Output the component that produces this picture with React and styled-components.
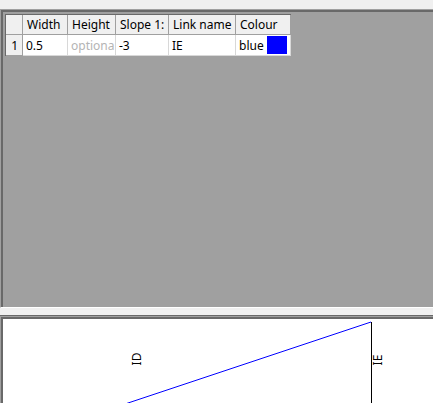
import React from 'react';
import styled, { createGlobalStyle } from 'styled-components';

const GlobalStyle = createGlobalStyle`
html, body {
  margin: 0;
  padding: 0;
  background: #f0f0f0;
  overflow: hidden;
}
body {
  font-family: "Noto Sans", "Open Sans", sans-serif;
  font-size: 12px;
  color: #000;
}
`;

const Window = styled.div`
width: 433px;
height: 403px;
display: flex;
flex-direction: column;
padding-top: 9px;
box-sizing: border-box;
overflow: hidden;
`;

const Panel = styled.div`
width: 450px;
box-sizing: border-box;
flex: ${p => (p.$grow ? '1 1 auto' : '0 0 auto')};
height: ${p => (p.$height ? p.$height + 'px' : 'auto')};
border-top: 1px solid #a0a0a0;
border-left: 1px solid #a0a0a0;
border-bottom: 1px solid #ffffff;
box-shadow: inset 2px 2px 0 #696969;
padding: 3px 0 0 3px;
background: ${p => p.$bg};
`;

const Splitter = styled.div`
height: 8px;
flex: 0 0 auto;
border-bottom: 1px solid #696969;
box-sizing: border-box;
`;

const Grid = styled.div`
display: grid;
grid-template-columns: 17px 45px 48px 53px 67px 55px;
grid-auto-rows: 20px 21px;
width: max-content;
border-top: 1px solid #696969;
border-left: 1px solid #696969;
margin-left: 1px;
margin-top: 1px;
`;

const HeadCell = styled.div`
background: #f0f0f0;
border-right: 1px solid #a0a0a0;
border-bottom: 1px solid #a0a0a0;
display: flex;
align-items: center;
justify-content: ${p => (p.$right ? 'flex-end' : 'flex-start')};
padding: 0 ${p => (p.$right ? '4px' : '0')} 0 ${p => (p.$right ? '0' : '4px')};
white-space: nowrap;
overflow: hidden;
`;

const Cell = styled.div`
background: #fff;
border-right: 1px solid #d8d8d8;
border-bottom: 1px solid #d8d8d8;
display: flex;
align-items: center;
padding-left: 3px;
white-space: nowrap;
overflow: hidden;
color: ${p => (p.$muted ? '#b4b4b4' : '#000')};
`;

const Swatch = styled.span`
flex: 0 0 20px;
height: 18px;
background: #0000ff;
margin-left: auto;
margin-right: 3px;
`;

const Canvas = styled.svg`
display: block;
width: 446px;
height: 90px;
`;

const columns = ['Width', 'Height', 'Slope 1:', 'Link name', 'Colour'];

export default function App() {
  return (
    <>
      <GlobalStyle />
      <Window>
        <Panel $height={299} $bg="#a0a0a0">
          <Grid>
            <HeadCell />
            {columns.map(c => (
              <HeadCell key={c}>{c}</HeadCell>
            ))}
            <HeadCell $right>1</HeadCell>
            <Cell>0.5</Cell>
            <Cell $muted>optiona</Cell>
            <Cell>-3</Cell>
            <Cell>IE</Cell>
            <Cell>
              blue
              <Swatch />
            </Cell>
          </Grid>
        </Panel>
        <Splitter />
        <Panel $grow $bg="#ffffff">
          <Canvas viewBox="0 0 446 90">
            <line x1="115" y1="86" x2="367" y2="2" stroke="#0000ff" strokeWidth="1" />
            <line x1="367.5" y1="2" x2="367.5" y2="90" stroke="#000" strokeWidth="1" />
            <text x="137" y="39" fontSize="12" fontFamily="Noto Sans, sans-serif" transform="rotate(-90 137 39)" textAnchor="middle">ID</text>
            <text x="378" y="40" fontSize="12" fontFamily="Noto Sans, sans-serif" transform="rotate(-90 378 40)" textAnchor="middle">IE</text>
          </Canvas>
        </Panel>
      </Window>
    </>
  );
}
